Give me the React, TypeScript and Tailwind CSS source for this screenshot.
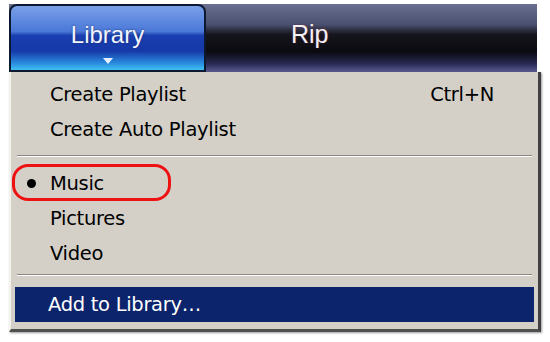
import React from "react";

const font = { fontFamily: '"DejaVu Sans", Tahoma, sans-serif' };

function Item({ label, shortcut, bullet }: { label: string; shortcut?: string; bullet?: boolean }) {
  return (
    <div className="h-[35px] flex items-center text-[19.5px] text-black relative tracking-[-0.3px]">
      <div className="w-[35px] flex justify-center">
        {bullet && <div className="w-[9px] h-[9px] rounded-full bg-black ml-[-2px]" />}
      </div>
      <span className="flex-1">{label}</span>
      {shortcut && <span className="pr-[40px]">{shortcut}</span>}
    </div>
  );
}

function Separator({ h, pt }: { h: string; pt: string }) {
  return (
    <div className={`${h} ${pt}`}>
      <div className="mx-[2px] border-t border-t-[#8a8780] border-b border-b-white" />
    </div>
  );
}

export default function App() {
  return (
    <div className="w-[550px] h-[342px] bg-white relative overflow-hidden" style={font}>
      {/* top bar */}
      <div className="pt-[4px] pl-[9px] pr-[13px]">
        <div className="flex h-[68px] bg-[linear-gradient(to_bottom,#6a7090_0%,#4a5070_30%,#15151c_45%,#0a0a10_70%,#2a2a55_88%,#5a5a90_100%)]">
          <div className="w-[197px] rounded-t-[8px] border-2 border-[#0b1830] flex flex-col items-center justify-center relative bg-[linear-gradient(to_bottom,#7aa0e8_0%,#4a78d8_40%,#1a3fb0_46%,#1638a8_70%,#2a8ee0_90%,#40c0f0_100%)]">
            <span className="text-[#f0f4ff] text-[24px] mt-[-6px]" style={{ fontFamily: '"Liberation Sans", Arial, sans-serif', textShadow: "0 0 2px #203070" }}>Library</span>
            <svg className="absolute bottom-[5px]" width="10" height="7" viewBox="0 0 10 7">
              <path d="M0 0 L10 0 L5 6 Z" fill="#e8f0ff" />
            </svg>
          </div>
          <div className="flex-1 flex items-center">
            <span className="ml-[85px] mt-[-6px] text-[#f4f0f4] text-[25px]" style={{ fontFamily: '"Liberation Sans", Arial, sans-serif', textShadow: "0 0 2px #603040" }}>Rip</span>
          </div>
        </div>
      </div>

      {/* menu */}
      <div className="ml-[9px] w-[532px] h-[260px] bg-[#d4d0c8] border-l-2 border-l-[#f4f2ec] border-r-[3px] border-r-[#404040] border-b-[3px] border-b-[#505050] shadow-[1px_1px_2px_rgba(0,0,0,0.4)] px-[4px] pt-[5px]">
        <Item label="Create Playlist" shortcut="Ctrl+N" />
        <Item label="Create Auto Playlist" />
        <Separator h="h-[19px]" pt="pt-[8px]" />
        <Item label="Music" bullet />
        <Item label="Pictures" />
        <Item label="Video" />
        <Separator h="h-[16px]" pt="pt-[3px]" />
        <div className="h-[35px] flex items-center bg-[#0c246c] text-white text-[19.5px] tracking-[-0.3px]">
          <span className="pl-[33px]">Add to Library…</span>
        </div>
      </div>

      {/* red highlight oval */}
      <div className="absolute left-[12px] top-[164px] w-[159px] h-[37px] border-[3px] border-[#ee1111] rounded-[16px]" />
    </div>
  );
}
